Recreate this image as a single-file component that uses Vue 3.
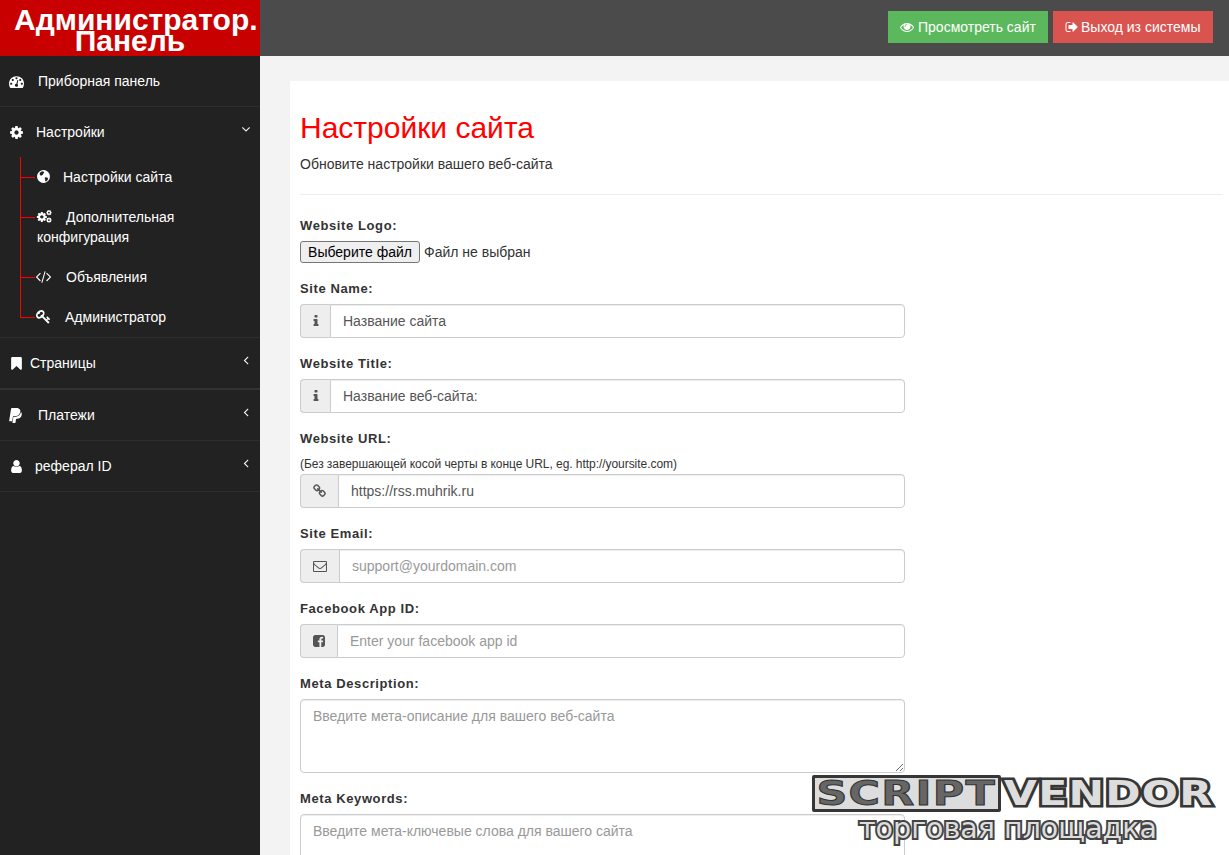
<script setup>
// FontAwesome style glyphs, all on a 1792 grid
const paths = {
  dashboard: 'M384 1152q0-53-37.5-90.5t-90.5-37.5-90.5 37.5-37.5 90.5 37.5 90.5 90.5 37.5 90.5-37.5 37.5-90.5zm192-448q0-53-37.5-90.5t-90.5-37.5-90.5 37.5-37.5 90.5 37.5 90.5 90.5 37.5 90.5-37.5 37.5-90.5zm428 481l101-382q6-26-7.5-48.5t-38.5-29.5-48 6.5-30 39.5l-101 382q-60 5-107 43.5t-63 98.5q-20 77 20 146t117 89 146-20 89-117q16-60-6-117t-72-91zm660-33q0-53-37.5-90.5t-90.5-37.5-90.5 37.5-37.5 90.5 37.5 90.5 90.5 37.5 90.5-37.5 37.5-90.5zm-640-640q0-53-37.5-90.5t-90.5-37.5-90.5 37.5-37.5 90.5 37.5 90.5 90.5 37.5 90.5-37.5 37.5-90.5zm448 192q0-53-37.5-90.5t-90.5-37.5-90.5 37.5-37.5 90.5 37.5 90.5 90.5 37.5 90.5-37.5 37.5-90.5zm320 448q0 261-141 483-19 29-54 29h-1402q-35 0-54-29-141-221-141-483 0-182 71-348t191-286 286-191 348-71 348 71 286 191 191 286 71 348z',
  cog: 'M1152 896q0-106-75-181t-181-75-181 75-75 181 75 181 181 75 181-75 75-181zm512-109v222q0 12-8 23t-20 13l-185 28q-19 54-39 91 35 50 107 138 10 12 10 25t-9 23q-27 37-99 108t-94 71q-12 0-26-9l-138-108q-44 23-91 38-16 136-29 186-7 28-36 28h-222q-14 0-24.5-8.5t-11.5-21.5l-28-184q-49-16-90-37l-141 107q-10 9-25 9-14 0-25-11-126-114-165-168-7-10-7-23 0-12 8-23 15-21 51-66.5t54-70.5q-27-50-41-99l-183-27q-13-2-21-12.5t-8-23.5v-222q0-12 8-23t19-13l186-28q14-46 39-92-40-57-107-138-10-12-10-24 0-10 9-23 26-36 98.5-107.5t94.5-71.5q13 0 26 10l138 107q44-23 91-38 16-136 29-186 7-28 36-28h222q14 0 24.5 8.5t11.5 21.5l28 184q49 16 90 37l142-107q9-9 24-9 13 0 25 10 129 119 165 170 7 8 7 22 0 12-8 23-15 21-51 66.5t-54 70.5q26 50 41 98l183 28q13 2 21 12.5t8 23.5z',
  globe: 'M896 128a768 768 0 1 0 .01 0zM620 330l180-60 120 70 60 130-110 80-40 130-130 50-60 120-120-90-90-170 40-140zM1120 980l210 30 120 110-60 190-190 170-110-60 10-190-70-130z',
  code: 'M553 1399l-50 50q-10 10-23 10t-23-10l-466-466q-10-10-10-23t10-23l466-466q10-10 23-10t23 10l50 50q10 10 10 23t-10 23l-393 393 393 393q10 10 10 23t-10 23zm591-1067l-373 1291q-4 13-15.5 19.5t-23.5 2.5l-62-17q-13-4-19.5-15.5t-2.5-24.5l373-1291q4-13 15.5-19.5t23.5-2.5l62 17q13 4 19.5 15.5t2.5 24.5zm657 651l-466 466q-10 10-23 10t-23-10l-50-50q-10-10-10-23t10-23l393-393-393-393q-10-10-10-23t10-23l50-50q10-10 23-10t23 10l466 466q10 10 10 23t-10 23z',
  key: 'M832 512q0-80-56-136t-136-56-136 56-56 136q0 42 19 83-41-19-83-19-80 0-136 56t-56 136 56 136 136 56 136-56 56-136q0-42-19-83 41 19 83 19 80 0 136-56t56-136zm851 704q0 17-49 66t-66 49q-9 0-28.5-16t-36.5-33-38.5-40-24.5-26l-96 96 220 220q28 28 28 68 0 42-39 81t-81 39q-40 0-68-28l-671-671q-176 131-365 131-163 0-265.5-102.5t-102.5-265.5q0-160 95-313t248-248 313-95q163 0 265.5 102.5t102.5 265.5q0 189-131 365l355 355 96-96q-3-3-26-24.5t-40-38.5-33-36.5-16-28.5q0-17 49-66t66-49q13 0 23 10 6 6 46 44.5t82 79.5 86.5 86 73 78 28.5 41z',
  bookmark: 'M1420 128q23 0 44 9 33 13 52.5 41t19.5 62v1289q0 34-19.5 62t-52.5 41q-19 8-44 8-48 0-83-32l-441-424-441 424q-36 33-83 33-23 0-44-9-33-13-52.5-41t-19.5-62v-1289q0-34 19.5-62t52.5-41q21-9 44-9h1048z',
  paypal: 'M1519 646q18 84-4 204-87 444-565 444h-44q-25 0-44 16.5t-24 42.5l-4 19-55 346-2 15q-5 26-24.5 42.5t-44.5 16.5h-251q-21 0-33-15t-9-36q9-56 26.5-168t26.5-168 27-167.5 27-167.5q5-37 43-37h131q133 2 236-21 175-39 287-144 102-95 155-246 24-70 35-133 1-6 2.5-7.5t3.5-1 6 3.5q79 59 98 162zm-172-282q0 107-46 236-80 233-302 315-113 40-239 42 0 1-90 1l-90-1q-100 0-118 96-2 8-85 530-1 10-12 10h-295q-22 0-36.5-16.5t-11.5-38.5l232-1471q5-29 27.5-48t51.5-19h598q34 0 97.5 13t111.5 32q107 41 163.5 123t56.5 196z',
  user: 'M1536 1399q0 109-62.5 187t-150.5 78h-854q-88 0-150.5-78t-62.5-187q0-85 8.5-160.5t31.5-152 58.5-131 94-89 134.5-34.5q131 128 313 128t313-128q76 0 134.5 34.5t94 89 58.5 131 31.5 152 8.5 160.5zm-256-887q0 159-112.5 271.5t-271.5 112.5-271.5-112.5-112.5-271.5 112.5-271.5 271.5-112.5 271.5 112.5 112.5 271.5z',
  angleLeft: 'M1203 544q0 13-10 23l-393 393 393 393q10 10 10 23t-10 23l-50 50q-10 10-23 10t-23-10l-466-466q-10-10-10-23t10-23l466-466q10-10 23-10t23 10l50 50q10 10 10 23z',
  angleDown: 'M1395 736q0 13-10 23l-466 466q-10 10-23 10t-23-10l-466-466q-10-10-10-23t10-23l50-50q10-10 23-10t23 10l393 393 393-393q10-10 23-10t23 10l50 50q10 10 10 23z',
  eye: 'M1664 960q-152-236-381-353 61 104 61 225 0 185-131.5 316.5t-316.5 131.5-316.5-131.5-131.5-316.5q0-121 61-225-229 117-381 353 133 205 333.5 326.5t434.5 121.5 434.5-121.5 333.5-326.5zm-720-384q0-20-14-34t-34-14q-125 0-214.5 89.5t-89.5 214.5q0 20 14 34t34 14 34-14 14-34q0-86 61-147t147-61q20 0 34-14t14-34zm848 384q0 34-20 69-140 230-376.5 368.5t-499.5 138.5-499.5-139-376.5-368q-20-35-20-69t20-69q140-229 376.5-368t499.5-139 499.5 139 376.5 368q20 35 20 69z',
  signOut: 'M704 1440q0 4 1 20t.5 26.5-3 23.5-10 19.5-20.5 6.5h-320q-119 0-203.5-84.5t-84.5-203.5v-704q0-119 84.5-203.5t203.5-84.5h320q13 0 22.5 9.5t9.5 22.5q0 4 1 20t.5 26.5-3 23.5-10 19.5-20.5 6.5h-320q-66 0-113 47t-47 113v704q0 66 47 113t113 47h312l11.5 1 11.5 3 8 5.5 7 9 2 13.5zm928-544q0 26-19 45l-544 544q-19 19-45 19t-45-19-19-45v-288h-448q-26 0-45-19t-19-45v-384q0-26 19-45t45-19h448v-288q0-26 19-45t45-19 45 19l544 544q19 19 19 45z',
  info: 'M1216 1344v128q0 26-19 45t-45 19h-512q-26 0-45-19t-19-45v-128q0-26 19-45t45-19h64v-384h-64q-26 0-45-19t-19-45v-128q0-26 19-45t45-19h384q26 0 45 19t19 45v576h64q26 0 45 19t19 45zm-128-1152v192q0 26-19 45t-45 19h-256q-26 0-45-19t-19-45v-192q0-26 19-45t45-19h256q26 0 45 19t19 45z',
  link: 'M1456 1216q0-40-28-68l-208-208q-28-28-68-28-42 0-72 32 3 3 19 18.5t21.5 21.5 15 19 13 25.5 3.5 27.5q0 40-28 68t-68 28q-15 0-27.5-3.5t-25.5-13-19-15-21.5-21.5-18.5-19q-33 31-33 73 0 40 28 68l206 207q27 27 68 27 40 0 68-26l147-146q28-28 28-67zm-703-705q0-40-28-68l-206-207q-28-28-68-28-39 0-68 27l-147 146q-28 28-28 67 0 40 28 68l208 208q27 27 68 27 42 0 72-31-3-3-19-18.5t-21.5-21.5-15-19-13-25.5-3.5-27.5q0-40 28-68t68-28q15 0 27.5 3.5t25.5 13 19 15 21.5 21.5 18.5 19q33-31 33-73zm895 705q0 120-85 203l-147 146q-83 83-203 83-121 0-204-85l-206-207q-83-83-83-203 0-123 88-209l-88-88q-86 88-208 88-120 0-204-84l-208-208q-84-84-84-204t85-203l147-146q83-83 203-83 121 0 204 85l206 207q83 83 83 203 0 123-88 209l88 88q86-88 208-88 120 0 204 84l208 208q84 84 84 204z',
  envelope: 'M1664 1504v-768q-32 36-69 66-268 206-426 338-51 43-83 67t-86.5 48.5-102.5 24.5h-2q-48 0-102.5-24.5t-86.5-48.5-83-67q-158-132-426-338-37-30-69-66v768q0 13 9.5 22.5t22.5 9.5h1472q13 0 22.5-9.5t9.5-22.5zm0-1051v-24.5l-.5-13-3-12.5-5.5-9-9-7.5-14-2.5h-1472q-13 0-22.5 9.5t-9.5 22.5q0 168 147 284 193 152 401 317 6 5 35 29.5t46 37.5 44.5 31.5 50.5 27.5 43 9h2q20 0 43-9t50.5-27.5 44.5-31.5 46-37.5 35-29.5q208-165 401-317 54-43 100.5-115.5t46.5-131.5zm128-37v1088q0 66-47 113t-113 47h-1472q-66 0-113-47t-47-113v-1088q0-66 47-113t113-47h1472q66 0 113 47t47 113z',
  facebook: 'M1376 128q119 0 203.5 84.5t84.5 203.5v960q0 119-84.5 203.5t-203.5 84.5h-188v-595h199l30-232h-229v-148q0-56 23.5-84t91.5-28l122-1v-207q-63-9-178-9-136 0-217.5 80t-81.5 226v171h-200v232h200v595h-532q-119 0-203.5-84.5t-84.5-203.5v-960q0-119 84.5-203.5t203.5-84.5h960z',
}

const menu = [
  { icon: 'dashboard', label: 'Приборная панель', gap: 14 },
  {
    icon: 'cog',
    label: 'Настройки',
    gap: 12,
    arrow: 'angleDown',
    children: [
      { icon: 'globe', label: 'Настройки сайта', gap: 12 },
      { icon: 'cogs', label: 'Дополнительная конфигурация', gap: 14 },
      { icon: 'code', label: 'Объявления', gap: 15 },
      { icon: 'key', label: 'Администратор', gap: 14 },
    ],
  },
  { icon: 'bookmark', label: 'Страницы', gap: 6, arrow: 'angleLeft', thick: true },
  { icon: 'paypal', label: 'Платежи', gap: 14, arrow: 'angleLeft' },
  { icon: 'user', label: 'реферал ID', gap: 11, arrow: 'angleLeft' },
]

const fields = [
  { label: 'Site Name:', icon: 'info', addon: 30, value: 'Название сайта' },
  { label: 'Website Title:', icon: 'info', addon: 30, value: 'Название веб-сайта:' },
  {
    label: 'Website URL:',
    icon: 'link',
    addon: 38,
    value: 'https://rss.muhrik.ru',
    help: '(Без завершающей косой черты в конце URL, eg. http://yoursite.com)',
  },
  { label: 'Site Email:', icon: 'envelope', addon: 39, placeholder: 'support@yourdomain.com' },
  { label: 'Facebook App ID:', icon: 'facebook', addon: 37, placeholder: 'Enter your facebook app id' },
]
</script>

<template>
  <div class="page">
    <aside class="sidebar">
      <div class="logo"><span class="logo-top">Администратор.</span><span class="logo-bottom">Панель</span></div>
      <ul class="menu">
        <li v-for="item in menu" :key="item.label" :class="{ thick: item.thick }">
          <a class="menu-link">
            <svg class="icon" viewBox="0 0 1792 1792"><path :d="paths[item.icon]" /></svg>
            <span :style="{ marginLeft: item.gap + 'px' }">{{ item.label }}</span>
            <svg v-if="item.arrow" class="arrow" viewBox="0 0 1792 1792"><path :d="paths[item.arrow]" /></svg>
          </a>
          <ul v-if="item.children" class="submenu">
            <li v-for="child in item.children" :key="child.label">
              <svg v-if="child.icon === 'cogs'" class="icon sub-icon cogs" viewBox="0 0 1920 1792">
                <path :d="paths.cog" transform="translate(0 250) scale(.78)" />
                <path :d="paths.cog" transform="translate(1180 60) scale(.42)" />
                <path :d="paths.cog" transform="translate(1180 950) scale(.42)" />
              </svg>
              <svg v-else class="icon sub-icon" viewBox="0 0 1792 1792" fill-rule="evenodd"><path :d="paths[child.icon]" /></svg>
              <span :style="{ marginLeft: child.gap + 'px' }">{{ child.label }}</span>
            </li>
          </ul>
        </li>
      </ul>
    </aside>

    <div class="main">
      <header class="topbar">
        <a class="btn btn-green">
          <svg class="btn-icon" viewBox="0 0 1792 1792"><path :d="paths.eye" /></svg>
          Просмотреть сайт
        </a>
        <a class="btn btn-red">
          <svg class="btn-icon out" viewBox="0 0 1664 1792"><path :d="paths.signOut" /></svg>
          Выход из системы
        </a>
      </header>

      <section class="content">
        <div class="card">
          <h1>Настройки сайта</h1>
          <p class="lead">Обновите настройки вашего веб-сайта</p>
          <hr />

          <div class="form-group">
            <label>Website Logo:</label>
            <div class="file-row">
              <button class="file-btn" type="button">Выберите файл</button>
              <span>Файл не выбран</span>
            </div>
          </div>

          <div v-for="field in fields" :key="field.label" class="form-group">
            <label>{{ field.label }}</label>
            <p v-if="field.help" class="help">{{ field.help }}</p>
            <div class="input-group">
              <span class="addon" :style="{ width: field.addon + 'px' }">
                <svg viewBox="0 0 1792 1792"><path :d="paths[field.icon]" /></svg>
              </span>
              <input type="text" :value="field.value" :placeholder="field.placeholder" />
            </div>
          </div>

          <div class="form-group">
            <label>Meta Description:</label>
            <textarea placeholder="Введите мета-описание для вашего веб-сайта"></textarea>
          </div>
          <div class="form-group">
            <label>Meta Keywords:</label>
            <textarea placeholder="Введите мета-ключевые слова для вашего сайта"></textarea>
          </div>
        </div>
      </section>
    </div>

    <div class="watermark">
      <div class="wm-top">
        <div class="wm-script"><span>SCRIPT</span></div>
        <span class="wm-vendor">VENDOR</span>
      </div>
      <div class="wm-sub">торговая площадка</div>
    </div>
  </div>
</template>

<style scoped>
* {
  box-sizing: border-box;
}

.page {
  position: relative;
  display: flex;
  height: 855px;
  overflow: hidden;
  font-family: "Liberation Sans", Arial, sans-serif;
  font-size: 14px;
  line-height: 20px;
  color: #333;
  background: #f3f3f3;
}

.sidebar {
  flex: 0 0 260px;
  background: #222;
  color: #fff;
}

.logo {
  height: 56px;
  padding-top: 10px;
  background: #c80000;
  color: #fff;
  font-size: 30px;
  font-weight: bold;
  white-space: nowrap;
}

.logo span {
  display: block;
}

.logo-top {
  padding-left: 14px;
  line-height: 20px;
}

.logo-bottom {
  margin-top: 2px;
  line-height: 18px;
  text-align: center;
}

.menu,
.submenu {
  list-style: none;
  margin: 0;
  padding: 0;
}

.menu > li {
  border-bottom: 1px solid #2e2e2e;
}

.menu > li.thick {
  border-bottom: 2px solid #333;
}

.menu-link {
  position: relative;
  display: flex;
  align-items: center;
  height: 50px;
  padding-left: 9px;
}

.icon {
  flex: none;
  width: 15px;
  height: 15px;
  fill: #fff;
}

.arrow {
  position: absolute;
  right: 7px;
  top: 15px;
  width: 14px;
  height: 14px;
  fill: #fff;
}

.submenu {
  position: relative;
  margin-left: 20px;
}

.submenu::before {
  content: "";
  position: absolute;
  left: 0;
  top: 0;
  bottom: 20px;
  width: 1px;
  background: #f00;
}

.submenu li {
  position: relative;
  padding: 10px 20px 10px 17px;
}

.submenu li::before {
  content: "";
  position: absolute;
  left: 0;
  top: 20px;
  width: 15px;
  height: 1px;
  background: #f00;
}

.sub-icon {
  display: inline-block;
  margin-left: -1px;
  vertical-align: -2px;
}

.cogs {
  width: 16px;
}

.main {
  flex: 1;
  min-width: 0;
}

.topbar {
  display: flex;
  justify-content: flex-end;
  gap: 5px;
  height: 56px;
  padding: 11px 16px 0 0;
  background: #4b4b4b;
}

.btn {
  display: flex;
  align-items: center;
  gap: 4px;
  width: 160px;
  height: 32px;
  padding-left: 12px;
  color: #fff;
}

.btn-green {
  background: #5cb85c;
}

.btn-red {
  background: #d9534f;
}

.btn-icon {
  width: 14px;
  height: 14px;
  fill: #fff;
}

.btn-icon.out {
  width: 13px;
  height: 14px;
  margin-right: -1px;
}

.content {
  padding: 25px 0 0 30px;
}

.card {
  padding: 0 6px 0 10px;
  background: #fff;
}

h1 {
  margin: 0;
  padding-top: 30px;
  color: #f00;
  font-size: 30px;
  font-weight: 500;
  line-height: 33px;
}

.lead {
  margin: 10px 0 0;
}

hr {
  height: 1px;
  margin: 20px 0;
  border: 0;
  background: #eee;
}

.form-group {
  margin-bottom: 15px;
}

label {
  display: block;
  height: 21px;
  margin-bottom: 5px;
  font-size: 13px;
  font-weight: bold;
  line-height: 22px;
  letter-spacing: .6px;
}

.help {
  height: 16px;
  margin: 7px 0 2px;
  font-size: 12px;
  line-height: 16px;
  letter-spacing: -.05px;
}

.file-row {
  display: flex;
  align-items: center;
  gap: 4px;
  height: 22px;
}

.file-btn {
  height: 22px;
  width: 120px;
  padding: 0;
  border: 1px solid #767676;
  border-radius: 3px;
  background: #efefef;
  color: #000;
  font: 14px "Liberation Sans", Arial, sans-serif;
}

.input-group {
  display: flex;
  width: 605px;
  height: 34px;
}

.addon {
  display: flex;
  flex: none;
  align-items: center;
  justify-content: center;
  border: 1px solid #ccc;
  border-right: 0;
  border-radius: 4px 0 0 4px;
  background: #eee;
}

.addon svg {
  width: 14px;
  height: 14px;
  fill: #555;
}

input {
  flex: 1;
  min-width: 0;
  padding: 6px 12px;
  border: 1px solid #ccc;
  border-radius: 0 4px 4px 0;
  outline: 0;
  background: #fff;
  color: #555;
  font: 14px "Liberation Sans", Arial, sans-serif;
  box-shadow: inset 0 1px 1px rgba(0, 0, 0, .075);
}

textarea {
  display: block;
  width: 605px;
  height: 74px;
  padding: 6px 12px;
  border: 1px solid #ccc;
  border-radius: 4px;
  outline: 0;
  color: #555;
  font: 14px/20px "Liberation Sans", Arial, sans-serif;
  box-shadow: inset 0 1px 1px rgba(0, 0, 0, .075);
}

input::placeholder,
textarea::placeholder {
  color: #999;
  opacity: 1;
}

.watermark {
  position: absolute;
  left: 812px;
  top: 775px;
  width: 403px;
  font-family: "DejaVu Sans", sans-serif;
  font-weight: bold;
}

.wm-top {
  display: flex;
  height: 37px;
  font-size: 34px;
  line-height: 36px;
  letter-spacing: 1px;
}

.wm-script {
  flex: none;
  width: 189px;
  border: 3px solid #363636;
  border-radius: 2px;
  background: #ddd;
  color: #666;
  line-height: 30px;
  text-align: center;
}

.wm-script span {
  display: inline-block;
  transform: scaleX(1.26);
  -webkit-text-stroke: 1px #333;
}

.wm-vendor {
  display: block;
  margin-left: 3px;
  transform: scaleX(1.25);
  transform-origin: left center;
  color: #ddd;
  -webkit-text-stroke: 5px #363636;
  paint-order: stroke fill;
}

.wm-sub {
  margin-top: 3px;
  padding-right: 11px;
  color: #ddd;
  font-size: 28.5px;
  font-weight: normal;
  line-height: 28px;
  text-align: center;
  -webkit-text-stroke: 4px #444;
  paint-order: stroke fill;
}
</style>

<style>
html,
body {
  margin: 0;
  overflow: hidden;
}
</style>
